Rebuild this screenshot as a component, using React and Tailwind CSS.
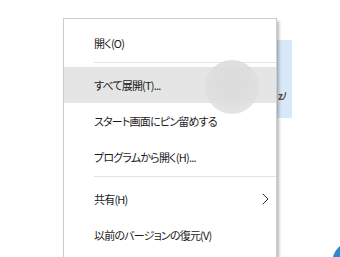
import React from "react";

const font = {
  fontFamily: '"Noto Sans CJK JP", "Noto Sans", sans-serif',
  fontFeatureSettings: '"palt"',
};

function Row({ children, hover, chevron }) {
  return (
    <div
      className={
        "flex h-[36px] items-center justify-between pl-[30px] pr-[7px] text-[11px] tracking-[-0.8px] text-[#1a1a1a] " +
        (hover ? "bg-[#e5e5e5]" : "")
      }
    >
      <span className="leading-none">{children}</span>
      {chevron && (
        <svg width="7" height="12" viewBox="0 0 7 12" className="block">
          <polyline points="0.8,0.8 6,6 0.8,11.2" fill="none" stroke="#333" strokeWidth="1" />
        </svg>
      )}
    </div>
  );
}

function Sep() {
  return (
    <div className="h-[6px] pt-[1px] pl-[30px]">
      <div className="h-px bg-[#e3e3e3]" />
    </div>
  );
}

export default function App() {
  return (
    <div className="relative h-[257px] w-[340px] overflow-hidden bg-white" style={font}>
      {/* background window selection */}
      <div className="absolute left-[277px] top-[40px] flex h-[78px] w-[15px] items-end bg-[#d9e8f8] pb-[17px] pl-[1px]">
        <span className="text-[10px] font-bold leading-none tracking-[-1px] text-[#5a4a3a]">zﾉ</span>
      </div>
      {/* bottom-right blue icon edge */}
      <svg className="absolute left-[330px] top-[242px]" width="10" height="15" viewBox="0 0 10 15">
        <path d="M10 4 L10 15 L3 15 Q5 8 10 4 Z" fill="#2a8ad0" />
      </svg>

      {/* context menu */}
      <div className="absolute left-[63px] top-[18px] h-[250px] w-[214px] border-l border-r border-t border-[#cdcdcd] bg-white pt-[6px] shadow-[2px_3px_3px_rgba(0,0,0,0.28)]">
        <Row>開く(O)</Row>
        <Sep />
        <Row hover>すべて展開(T)...</Row>
        <Row>スタート画面にピン留めする</Row>
        <Row>プログラムから開く(H)...</Row>
        <Sep />
        <Row chevron>共有(H)</Row>
        <Row>以前のバージョンの復元(V)</Row>
      </div>

      {/* touch feedback circle */}
      <div className="absolute left-[205px] top-[60px] h-[54px] w-[54px] rounded-full bg-[radial-gradient(circle_at_50%_40%,#dadada_0%,#dedede_60%,#e9e9e9_100%)] opacity-90" />
    </div>
  );
}
